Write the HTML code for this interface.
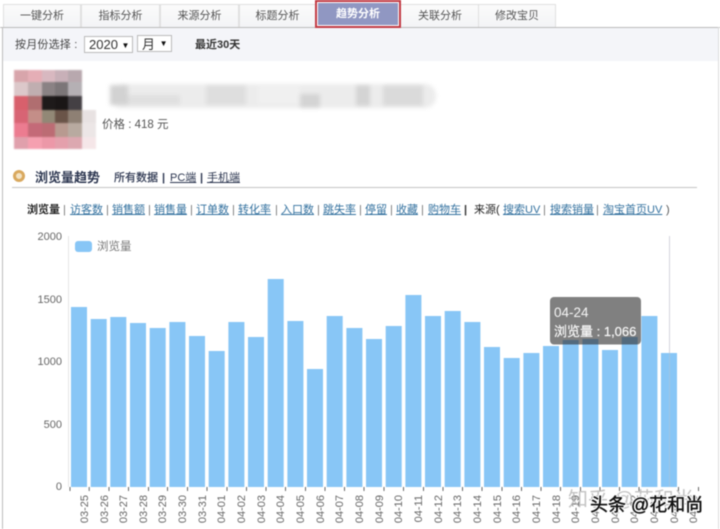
<!DOCTYPE html>
<html lang="zh"><head><meta charset="utf-8"><title>趋势分析</title>
<style>
html,body{margin:0;padding:0;background:#fff}
#p{position:relative;width:720px;height:529px;overflow:hidden;background:#fff;font-family:"Liberation Sans","Noto Sans CJK SC",sans-serif;font-size:11px;color:#333;filter:blur(.4px)}
#p div{position:absolute;white-space:nowrap}
.t{top:4px;height:23px;line-height:22px;text-align:center;color:#555;background:linear-gradient(#fbfbfb,#f3f4f6);border:1px solid #e0e0e0;border-bottom:0;box-sizing:border-box;font-size:11px}
.m{top:203px;line-height:15px;font-size:11px;color:#33719f;text-decoration:underline}
.s{top:203px;line-height:15px;font-size:11px;color:#777}
.c{width:14px;height:14px}
.g{background:#d8d8d8}
</style></head><body><div id="p">
<div style="left:0;top:27px;width:720px;height:1px;background:#bbb"></div>
<div style="left:2px;top:27px;width:1px;height:502px;background:#bdbdbd"></div>
<div style="left:718px;top:27px;width:1px;height:502px;background:#ddd"></div>
<div style="left:3px;top:28px;width:715px;height:33px;background:#f4f5f9"></div>

<div class="t" style="left:3px;width:78px">一键分析</div>
<div class="t" style="left:81px;width:79px">指标分析</div>
<div class="t" style="left:160px;width:79px">来源分析</div>
<div class="t" style="left:239px;width:77px">标题分析</div>
<div class="t" style="left:401px;width:78px;border-left:0;border-right:0">关联分析</div>
<div class="t" style="left:478px;width:78px">修改宝贝</div>
<div style="left:315px;top:0;width:86px;height:28px;box-sizing:border-box;border:2px solid #c23a44;background:#fff"></div>
<div style="left:318px;top:3px;width:80px;height:22px;background:#9097c2;color:#fff;font-weight:bold;text-align:center;line-height:22px;font-size:11px">趋势分析</div>

<div style="left:15px;top:38px;line-height:15px;color:#444;letter-spacing:.2px">按月份选择 :</div>
<div style="left:84px;top:36px;width:49px;height:17px;box-sizing:border-box;border:1px solid #bbb;background:#fff;font-size:13px;line-height:15px;color:#333;padding-left:4px">2020 <span style="font-size:8px;vertical-align:1px;color:#111">&#9660;</span></div>
<div style="left:137px;top:35px;width:35px;height:17px;box-sizing:border-box;border:1px solid #bbb;background:#fff;font-size:13px;line-height:15px;color:#333;padding-left:4px">月 <span style="font-size:8px;vertical-align:3px;color:#111;margin-left:1px">&#9660;</span></div>
<div style="left:195px;top:38px;line-height:15px;font-weight:bold;color:#333">最近30天</div>

<!-- mosaic -->
<div style="left:10px;top:66px;width:90px;height:88px;filter:blur(.8px)">
<div class="c" style="left:4px;top:4px;height:12px;background:#d8a5ab"></div><div class="c" style="left:18px;top:4px;height:12px;background:#e5aeb6"></div><div class="c" style="left:32px;top:4px;height:12px;background:#d8b8c0"></div><div class="c" style="left:45px;top:4px;height:12px;background:#c8b0b8"></div><div class="c" style="left:58px;top:4px;height:12px;background:#b8a8ae"></div>
<div class="c" style="left:4px;top:16px;background:#dcc8ca"></div><div class="c" style="left:18px;top:16px;background:#c0aeb0"></div><div class="c" style="left:32px;top:16px;background:#8a8284"></div><div class="c" style="left:45px;top:16px;background:#7c7678"></div><div class="c" style="left:58px;top:16px;background:#b5b0b4"></div>
<div class="c" style="left:4px;top:30px;background:#d8606c"></div><div class="c" style="left:18px;top:30px;background:#b06e70"></div><div class="c" style="left:32px;top:30px;background:#1e1a1a"></div><div class="c" style="left:45px;top:30px;background:#1a1616"></div><div class="c" style="left:58px;top:30px;background:#444044"></div>
<div class="c" style="left:4px;top:44px;background:#d86474"></div><div class="c" style="left:18px;top:44px;background:#c48e88"></div><div class="c" style="left:32px;top:44px;background:#928876"></div><div class="c" style="left:45px;top:44px;background:#6a5448"></div><div class="c" style="left:58px;top:44px;background:#8e8074"></div><div class="c" style="left:72px;top:44px;background:#e8e2e2"></div>
<div class="c" style="left:4px;top:57px;background:#ec7c90"></div><div class="c" style="left:18px;top:57px;background:#c46a78"></div><div class="c" style="left:32px;top:57px;background:#bc6c74"></div><div class="c" style="left:45px;top:57px;background:#b89a90"></div><div class="c" style="left:58px;top:57px;background:#b8aaa0"></div><div class="c" style="left:72px;top:57px;background:#ece6e6"></div>
<div class="c" style="left:4px;top:71px;height:12px;background:#e0a0ac"></div><div class="c" style="left:18px;top:71px;height:12px;background:#f5a0b0"></div><div class="c" style="left:32px;top:71px;height:12px;background:#ec98a8"></div><div class="c" style="left:45px;top:71px;height:12px;background:#e4a0ac"></div><div class="c" style="left:58px;top:71px;height:12px;background:#dca8b0"></div><div class="c" style="left:72px;top:71px;height:12px;background:#f5e6e8"></div>
</div>

<!-- blurred title -->
<div style="left:108px;top:82px;width:330px;height:27px;filter:blur(2px)">
<div style="left:2px;top:2px;width:326px;height:24px;border-radius:11px;background:#ececec"></div>
<div class="g" style="left:2px;top:3px;width:18px;height:20px;background:#d2d2d2"></div>
<div class="g" style="left:20px;top:13px;width:52px;height:10px;background:#e0e0e0"></div>
<div class="g" style="left:98px;top:3px;width:40px;height:20px;background:#dedede"></div>
<div class="g" style="left:150px;top:4px;width:42px;height:18px;background:#f0f0f0"></div>
<div class="g" style="left:192px;top:12px;width:20px;height:14px;background:#d4d4d4"></div>
<div class="g" style="left:248px;top:3px;width:14px;height:21px;background:#d4d4d4"></div>
<div class="g" style="left:275px;top:3px;width:40px;height:21px;background:#dadada"></div>
</div>
<div style="left:102px;top:118px;line-height:15px;color:#555;font-size:11.5px">价格 : 418 元</div>

<!-- section header -->
<div style="left:13px;top:170px;width:12px;height:12px;box-sizing:border-box;border-radius:50%;border:3px solid #d9a95f;background:#f3e3c4"></div>
<div style="left:35px;top:170px;line-height:16px;font-size:13px;font-weight:bold;color:#2c3650">浏览量趋势</div>
<div style="left:114px;top:171px;line-height:15px;color:#2c3650;-webkit-text-stroke:.2px #2c3650">所有数据</div>
<div style="left:162px;top:171px;line-height:15px;color:#2c3650;font-weight:bold">|</div>
<div style="left:170px;top:171px;line-height:15px;color:#2c3650;text-decoration:underline">PC端</div>
<div style="left:200px;top:171px;line-height:15px;color:#2c3650;font-weight:bold">|</div>
<div style="left:207px;top:171px;line-height:15px;color:#2c3650;text-decoration:underline">手机端</div>
<div style="left:12px;top:187px;width:685px;height:1px;background:#c4c4c4"></div>

<!-- metrics -->
<div style="left:27px;top:203px;line-height:15px;font-weight:bold;color:#222">浏览量</div>
<div class="s" style="left:63px">|</div><div class="m" style="left:70px">访客数</div>
<div class="s" style="left:106px">|</div><div class="m" style="left:112px">销售额</div>
<div class="s" style="left:148px">|</div><div class="m" style="left:154px">销售量</div>
<div class="s" style="left:190px">|</div><div class="m" style="left:196px">订单数</div>
<div class="s" style="left:232px">|</div><div class="m" style="left:238px">转化率</div>
<div class="s" style="left:275px">|</div><div class="m" style="left:281px">入口数</div>
<div class="s" style="left:317px">|</div><div class="m" style="left:323px">跳失率</div>
<div class="s" style="left:359px">|</div><div class="m" style="left:365px">停留</div>
<div class="s" style="left:390px">|</div><div class="m" style="left:396px">收藏</div>
<div class="s" style="left:421px">|</div><div class="m" style="left:428px">购物车</div>
<div class="s" style="left:464px;color:#333;font-weight:bold">|</div>
<div style="left:474px;top:203px;line-height:15px;color:#222">来源(</div>
<div class="m" style="left:503px">搜索UV</div>
<div class="s" style="left:543px">|</div><div class="m" style="left:550px">搜索销量</div>
<div class="s" style="left:596px">|</div><div class="m" style="left:603px">淘宝首页UV</div>
<div class="s" style="left:666px;color:#555">)</div>

<svg width="720" height="529" viewBox="0 0 720 529" style="position:absolute;left:0;top:0" font-family="'Liberation Sans','Noto Sans CJK SC',sans-serif">
<g font-size="11" fill="#666" text-anchor="end">
<text x="62" y="240">2000</text><text x="62" y="303">1500</text><text x="62" y="365">1000</text><text x="62" y="428">500</text><text x="62" y="490">0</text>
</g>
<rect x="68" y="236" width="1" height="251" fill="#e6e6e6"/>
<rect x="669" y="236" width="1" height="251" fill="#d4d4dc"/>
<rect x="75" y="241" width="17" height="11" rx="3" fill="#88c6f6"/>
<text x="97" y="250" font-size="11.500" fill="#777">浏览量</text>
<g fill="#88c6f6">
<rect x="71" y="307" width="16" height="180"/><rect x="90.7" y="319" width="16" height="168"/><rect x="110.3" y="317" width="16" height="170"/><rect x="130" y="323" width="16" height="164"/><rect x="149.7" y="328" width="16" height="159"/><rect x="169.4" y="322" width="16" height="165"/><rect x="189" y="336" width="16" height="151"/><rect x="208.7" y="351" width="16" height="136"/><rect x="228.4" y="322" width="16" height="165"/><rect x="248" y="337" width="16" height="150"/><rect x="267.7" y="279" width="16" height="208"/><rect x="287.4" y="321" width="16" height="166"/><rect x="307" y="369" width="16" height="118"/><rect x="326.7" y="316" width="16" height="171"/><rect x="346.4" y="328" width="16" height="159"/><rect x="366" y="339" width="16" height="148"/><rect x="385.7" y="326" width="16" height="161"/><rect x="405.4" y="295" width="16" height="192"/><rect x="425" y="316" width="16" height="171"/><rect x="444.7" y="311" width="16" height="176"/><rect x="464.4" y="322" width="16" height="165"/><rect x="484" y="347" width="16" height="140"/><rect x="503.7" y="358" width="16" height="129"/><rect x="523.4" y="353" width="16" height="134"/><rect x="543" y="346" width="16" height="141"/><rect x="562.7" y="340" width="16" height="147"/><rect x="582.4" y="339" width="16" height="148"/><rect x="602" y="350" width="16" height="137"/><rect x="621.7" y="337" width="16" height="150"/><rect x="641.4" y="316" width="16" height="171"/><rect x="661" y="353" width="16" height="134"/>
</g>
<rect x="669" y="353" width="1" height="134" fill="#9fc4e4"/>
<g fill="#666">
<rect x="69.5" y="487" width="1" height="4"/><rect x="88.7" y="487" width="1" height="4"/><rect x="108.5" y="487" width="1" height="4"/><rect x="128" y="487" width="1" height="4"/><rect x="148" y="487" width="1" height="4"/><rect x="167" y="487" width="1" height="4"/><rect x="187" y="487" width="1" height="4"/><rect x="206.5" y="487" width="1" height="4"/><rect x="226.5" y="487" width="1" height="4"/><rect x="246" y="487" width="1" height="4"/><rect x="265.5" y="487" width="1" height="4"/><rect x="285" y="487" width="1" height="4"/><rect x="305" y="487" width="1" height="4"/><rect x="324.5" y="487" width="1" height="4"/><rect x="344" y="487" width="1" height="4"/><rect x="363.5" y="487" width="1" height="4"/><rect x="383.5" y="487" width="1" height="4"/><rect x="403" y="487" width="1" height="4"/><rect x="423" y="487" width="1" height="4"/><rect x="442.5" y="487" width="1" height="4"/><rect x="462" y="487" width="1" height="4"/><rect x="481.5" y="487" width="1" height="4"/><rect x="501.5" y="487" width="1" height="4"/><rect x="521" y="487" width="1" height="4"/><rect x="540.5" y="487" width="1" height="4"/><rect x="560" y="487" width="1" height="4"/><rect x="580" y="487" width="1" height="4"/><rect x="599.5" y="487" width="1" height="4"/><rect x="619" y="487" width="1" height="4"/><rect x="638.5" y="487" width="1" height="4"/><rect x="678" y="487" width="1" height="4"/><rect x="698" y="487" width="1" height="4"/>
</g>
<g font-size="11" fill="#666" text-anchor="end">
<text transform="translate(88,495) rotate(-90)">03-25</text><text transform="translate(108,495) rotate(-90)">03-26</text><text transform="translate(127,495) rotate(-90)">03-27</text><text transform="translate(147,495) rotate(-90)">03-28</text><text transform="translate(166,495) rotate(-90)">03-29</text><text transform="translate(186,495) rotate(-90)">03-30</text><text transform="translate(206,495) rotate(-90)">03-31</text><text transform="translate(225,495) rotate(-90)">04-01</text><text transform="translate(245,495) rotate(-90)">04-02</text><text transform="translate(265,495) rotate(-90)">04-03</text><text transform="translate(284,495) rotate(-90)">04-04</text><text transform="translate(304,495) rotate(-90)">04-05</text><text transform="translate(324,495) rotate(-90)">04-06</text><text transform="translate(343,495) rotate(-90)">04-07</text><text transform="translate(363,495) rotate(-90)">04-08</text><text transform="translate(383,495) rotate(-90)">04-09</text><text transform="translate(402,495) rotate(-90)">04-10</text><text transform="translate(422,495) rotate(-90)">04-11</text><text transform="translate(442,495) rotate(-90)">04-12</text><text transform="translate(461,495) rotate(-90)">04-13</text><text transform="translate(481,495) rotate(-90)">04-14</text><text transform="translate(501,495) rotate(-90)">04-15</text><text transform="translate(520,495) rotate(-90)">04-16</text><text transform="translate(540,495) rotate(-90)">04-17</text><text transform="translate(560,495) rotate(-90)">04-18</text><text transform="translate(579,495) rotate(-90)">04-19</text><text transform="translate(599,495) rotate(-90)">04-20</text><text transform="translate(619,495) rotate(-90)">04-21</text><text transform="translate(638,495) rotate(-90)">04-22</text><text transform="translate(658,495) rotate(-90)">04-23</text><text transform="translate(678,495) rotate(-90)">04-24</text><text transform="translate(697,495) rotate(-90)">04-25</text>
</g>
<rect x="550" y="297" width="91" height="47.500" rx="4" fill="#323232" fill-opacity=".62"/>
<text x="554" y="317" font-size="13.500" fill="#fff" fill-opacity=".92">04-24</text>
<text x="554" y="336" font-size="13" fill="#fff" fill-opacity=".92" stroke="#fff" stroke-width=".2">浏览量 : 1,066</text>
<text x="568" y="506" font-size="20" fill="#b4b4b4" fill-opacity=".8">知乎 @花和尚</text>
<text x="590" y="511" font-size="18" fill="#111" stroke="#fff" stroke-width="2.500" paint-order="stroke" stroke-linejoin="round">头条 @花和尚</text>
<text x="590" y="511" font-size="18" fill="#111" stroke="#111" stroke-width=".4">头条 @花和尚</text>
</svg>
</div></body></html>
